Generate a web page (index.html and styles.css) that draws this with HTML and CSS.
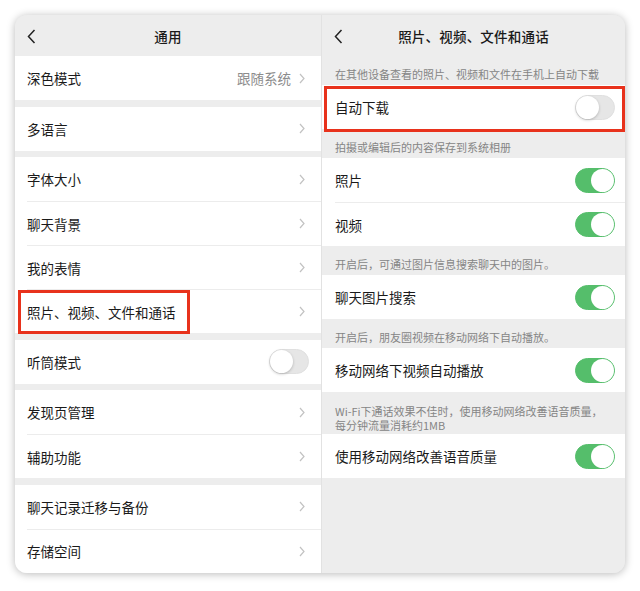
FILE: index.html
```html
<!DOCTYPE html>
<html lang="zh-CN">
<head>
    <meta charset="UTF-8">
    <meta name="viewport" content="width=device-width, initial-scale=1.0">
    <title>通用设置</title>
    <link rel="stylesheet" href="styles.css">
</head>
<body>

<div class="frame">
    <!-- left screen -->
    <div class="screen">
        <div class="navbar">
            <svg class="back" width="9" height="15" viewBox="0 0 9 15"><polyline points="7.5,1 1.5,7.5 7.5,14" /></svg>
            <span class="title">通用</span>
        </div>

        <div class="group">
            <div class="row"><span class="label">深色模式</span><span class="value">跟随系统</span><svg class="arrow" width="6" height="11" viewBox="0 0 6 11"><polyline points="1,1 5,5.5 1,10" /></svg></div>
        </div>
        <div class="group">
            <div class="row"><span class="label">多语言</span><svg class="arrow" width="6" height="11" viewBox="0 0 6 11"><polyline points="1,1 5,5.5 1,10" /></svg></div>
        </div>
        <div class="group">
            <div class="row"><span class="label">字体大小</span><svg class="arrow" width="6" height="11" viewBox="0 0 6 11"><polyline points="1,1 5,5.5 1,10" /></svg></div>
            <div class="row"><span class="label">聊天背景</span><svg class="arrow" width="6" height="11" viewBox="0 0 6 11"><polyline points="1,1 5,5.5 1,10" /></svg></div>
            <div class="row"><span class="label">我的表情</span><svg class="arrow" width="6" height="11" viewBox="0 0 6 11"><polyline points="1,1 5,5.5 1,10" /></svg></div>
            <div class="row"><span class="label">照片、视频、文件和通话</span><svg class="arrow" width="6" height="11" viewBox="0 0 6 11"><polyline points="1,1 5,5.5 1,10" /></svg><span class="mark mark-left"></span></div>
        </div>
        <div class="group">
            <div class="row toggle-row"><span class="label">听筒模式</span><span class="switch"></span></div>
        </div>
        <div class="group">
            <div class="row"><span class="label">发现页管理</span><svg class="arrow" width="6" height="11" viewBox="0 0 6 11"><polyline points="1,1 5,5.5 1,10" /></svg></div>
            <div class="row"><span class="label">辅助功能</span><svg class="arrow" width="6" height="11" viewBox="0 0 6 11"><polyline points="1,1 5,5.5 1,10" /></svg></div>
        </div>
        <div class="group">
            <div class="row"><span class="label">聊天记录迁移与备份</span><svg class="arrow" width="6" height="11" viewBox="0 0 6 11"><polyline points="1,1 5,5.5 1,10" /></svg></div>
            <div class="row"><span class="label">存储空间</span><svg class="arrow" width="6" height="11" viewBox="0 0 6 11"><polyline points="1,1 5,5.5 1,10" /></svg></div>
        </div>
    </div>

    <!-- right screen -->
    <div class="screen screen-right">
        <div class="navbar">
            <svg class="back" width="9" height="15" viewBox="0 0 9 15"><polyline points="7.5,1 1.5,7.5 7.5,14" /></svg>
            <span class="title">照片、视频、文件和通话</span>
        </div>

        <div class="note">在其他设备查看的照片、视频和文件在手机上自动下载</div>
        <div class="group">
            <div class="row toggle-row"><span class="label">自动下载</span><span class="switch"></span><span class="mark mark-right"></span></div>
        </div>

        <div class="note">拍摄或编辑后的内容保存到系统相册</div>
        <div class="group">
            <div class="row toggle-row"><span class="label">照片</span><span class="switch on"></span></div>
            <div class="row toggle-row"><span class="label">视频</span><span class="switch on"></span></div>
        </div>

        <div class="note">开启后，可通过图片信息搜索聊天中的图片。</div>
        <div class="group">
            <div class="row toggle-row"><span class="label">聊天图片搜索</span><span class="switch on"></span></div>
        </div>

        <div class="note">开启后，朋友圈视频在移动网络下自动播放。</div>
        <div class="group">
            <div class="row toggle-row"><span class="label">移动网络下视频自动播放</span><span class="switch on"></span></div>
        </div>

        <div class="note note-two">Wi-Fi下通话效果不佳时，使用移动网络改善语音质量，<br>每分钟流量消耗约1MB</div>
        <div class="group">
            <div class="row toggle-row"><span class="label">使用移动网络改善语音质量</span><span class="switch on"></span></div>
        </div>
    </div>
</div>

</body>
</html>
```

FILE: styles.css
```css
body {
    margin: 0;
    background-color: #fff;
    font-family: "Noto Sans CJK SC", "Noto Sans", sans-serif;
    color: #1a1a1a;
}

.frame {
    margin: 15px;
    width: 610px;
    height: 558px;
    border-radius: 12px;
    overflow: hidden;
    background-color: #ededed;
    box-shadow: 0 1px 8px rgba(0, 0, 0, 0.28);
    display: grid;
    grid-template-columns: 306px 304px;
}

.screen {
    background-color: #ededed;
}

.screen-right {
    border-left: 1px solid #e2e2e2;
}

.navbar {
    height: 41px;
    display: flex;
    align-items: center;
    justify-content: center;
    position: relative;
}

.back {
    position: absolute;
    left: 12px;
    top: 14px;
    fill: none;
    stroke: #222;
    stroke-width: 1.5;
}

.title {
    font-size: 13.5px;
    font-weight: 500;
    letter-spacing: 0.2px;
}

.group {
    background-color: #fff;
    padding-left: 12px;
}

.screen-right .group {
    padding-left: 13px;
}

.group + .group {
    margin-top: 6.5px;
}

.row {
    height: 44px;
    box-sizing: border-box;
    display: flex;
    align-items: center;
    padding-right: 16px;
    position: relative;
    font-size: 13.5px;
}

.row + .row {
    border-top: 1px solid #ececec;
}

.label {
    flex: 1;
}

.value {
    color: #8c8c8c;
    margin-right: 8px;
}

.arrow {
    fill: none;
    stroke: #c2c2c2;
    stroke-width: 1.2;
}

.toggle-row {
    padding-right: 12px;
}

.screen-right .toggle-row {
    padding-right: 10px;
}

.switch {
    width: 40px;
    height: 25px;
    border-radius: 13px;
    background-color: #e6e6e6;
    position: relative;
    box-sizing: border-box;
    border: 1px solid #e0e0e0;
}

.switch::after {
    content: "";
    position: absolute;
    top: 0;
    left: 0;
    width: 23px;
    height: 23px;
    border-radius: 50%;
    background-color: #fff;
    box-shadow: 0 1px 3px rgba(0, 0, 0, 0.22);
}

.switch.on {
    background-color: #55be6b;
    border-color: #55be6b;
}

.switch.on::after {
    left: 15px;
    box-shadow: none;
}

.note {
    padding: 12px 13px 4px;
    font-size: 11px;
    line-height: 13px;
    color: #858585;
}

.note-two {
    line-height: 14px;
    padding-bottom: 2px;
}

.mark {
    position: absolute;
    border: 3px solid #e8321c;
    box-sizing: border-box;
}

.mark-left {
    left: -9px;
    top: 0;
    width: 172px;
    height: 44px;
}

.mark-right {
    left: -11px;
    right: 0;
    top: 1px;
    height: 46px;
}
```
